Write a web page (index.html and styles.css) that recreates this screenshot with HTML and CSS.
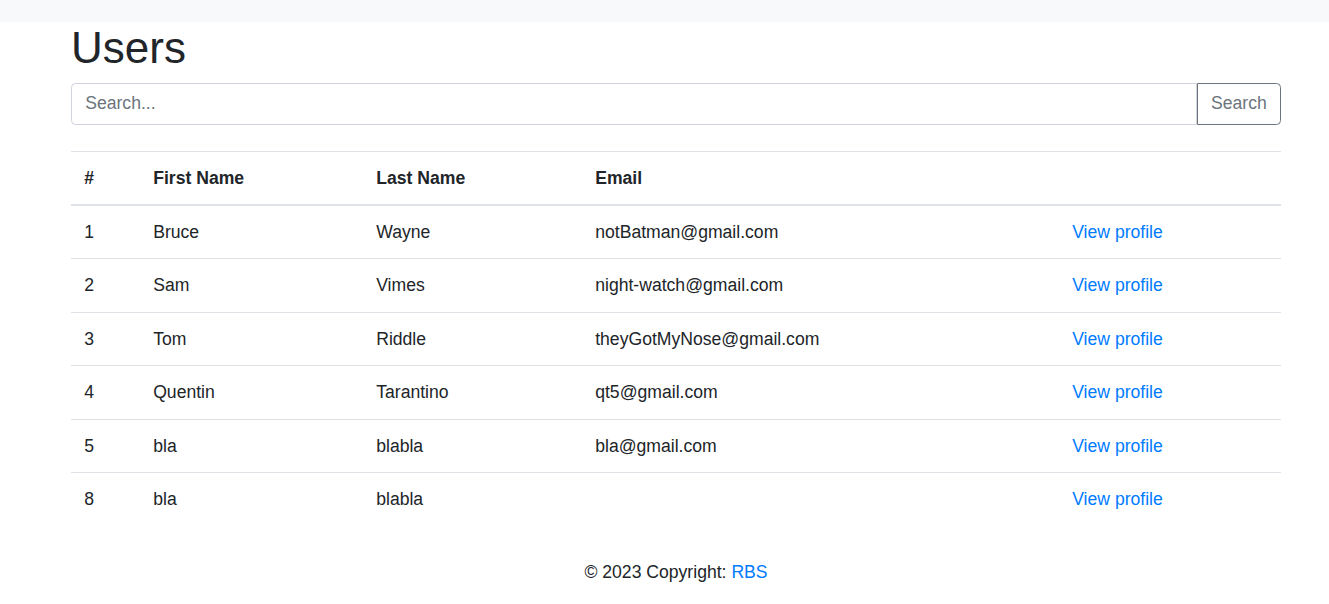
FILE: index.html
```html
<!DOCTYPE html>
<html lang="en">
<head>
<meta charset="utf-8">
<title>Users</title>
<link rel="stylesheet" href="styles.css">
</head>
<body>
<nav class="topbar"></nav>
<main class="container">
  <h1 class="title">Users</h1>
  <form class="search">
    <input class="search-input" type="text" placeholder="Search...">
    <button class="search-btn" type="button">Search</button>
  </form>
  <table class="users">
    <colgroup>
      <col class="c-id"><col class="c-first"><col class="c-last"><col class="c-email"><col class="c-action">
    </colgroup>
    <thead>
      <tr><th>#</th><th>First Name</th><th>Last Name</th><th>Email</th><th></th></tr>
    </thead>
    <tbody>
      <tr><td>1</td><td>Bruce</td><td>Wayne</td><td>notBatman@gmail.com</td><td><a href="#">View profile</a></td></tr>
      <tr><td>2</td><td>Sam</td><td>Vimes</td><td>night-watch@gmail.com</td><td><a href="#">View profile</a></td></tr>
      <tr><td>3</td><td>Tom</td><td>Riddle</td><td>theyGotMyNose@gmail.com</td><td><a href="#">View profile</a></td></tr>
      <tr><td>4</td><td>Quentin</td><td>Tarantino</td><td>qt5@gmail.com</td><td><a href="#">View profile</a></td></tr>
      <tr><td>5</td><td>bla</td><td>blabla</td><td>bla@gmail.com</td><td><a href="#">View profile</a></td></tr>
      <tr><td>8</td><td>bla</td><td>blabla</td><td></td><td><a href="#">View profile</a></td></tr>
    </tbody>
  </table>
</main>
<footer class="footer">© 2023 Copyright: <a href="#">RBS</a></footer>
</body>
</html>
```
FILE: styles.css
```css
* { box-sizing: border-box; }
html, body { margin: 0; padding: 0; }
body {
  font-family: "Liberation Sans", Arial, sans-serif;
  font-size: 17.6px;
  line-height: 1.5;
  color: #212529;
  background: #fff;
}
a { color: #007bff; text-decoration: none; }
.topbar { height: 22px; background: #f8f9fa; }
.container { width: 1210px; margin: 0 auto; padding: 0; position: relative; left: 11.5px; }
.title {
  margin: 0 0 7.8px;
  font-size: 44px;
  font-weight: 400;
  line-height: 1.2;
}
.search { display: flex; margin: 0 0 26px; }
.search-input {
  flex: 1;
  height: 42px;
  padding: 6.6px 13.2px;
  font: inherit;
  color: #495057;
  border: 1px solid #ced4da;
  border-radius: 4.4px 0 0 4.4px;
  outline: none;
}
.search-input::placeholder { color: #6c757d; opacity: 1; }
.search-btn {
  height: 42px;
  padding: 6.6px 13.2px;
  font: inherit;
  color: #6c757d;
  background: #fff;
  border: 1px solid #6c757d;
  border-radius: 0 4.4px 4.4px 0;
  margin-left: 0;
}
.users { width: 100%; border-collapse: collapse; margin-bottom: 17.6px; table-layout: fixed; }
.c-id { width: 69px; }
.c-first { width: 223px; }
.c-last { width: 219px; }
.c-email { width: 477px; }
.c-action { width: 222px; }
.users th, .users td {
  padding: 13px 13.2px;
  text-align: left;
  vertical-align: top;
  border-top: 1px solid #dee2e6;
  line-height: 26.4px;
}
.users th { font-weight: 700; }
.users thead th { border-bottom: 2px solid #dee2e6; }
.users tbody tr:first-child td { border-top: 0; }
.footer { text-align: center; padding: 16.4px 0 17.6px 23px; line-height: 26.4px; }
```
